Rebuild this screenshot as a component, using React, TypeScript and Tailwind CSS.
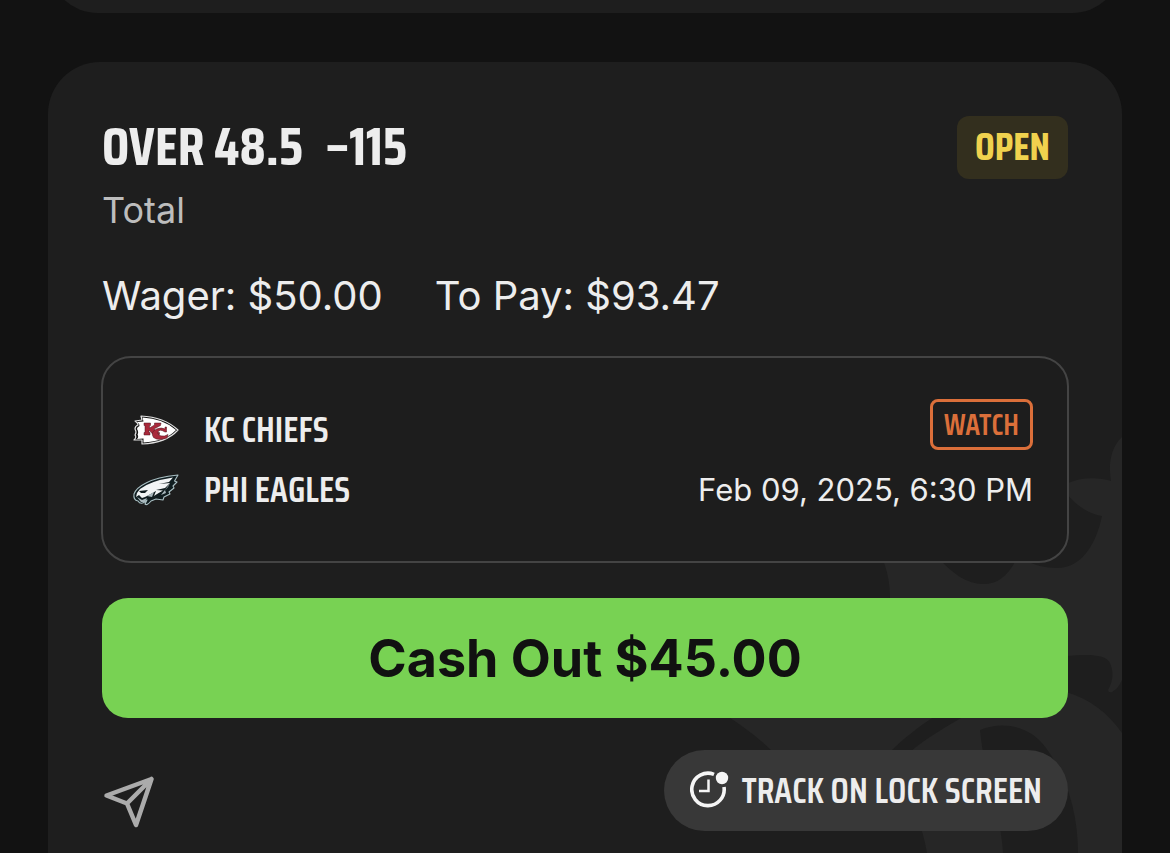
import type { ReactNode } from "react";

const display = "font-['Saira_Condensed','Liberation_Sans_Narrow',sans-serif]";

function Watermark() {
  return (
    <svg aria-hidden="true" className="absolute right-0 bottom-0" width="400" height="440" viewBox="722 413 400 440">
      <path
        fill="#262626"
        d="M1122 437C1111 447 1108 464 1111 481C1098 477 1080 477 1066 484V493C1077 507 1090 514 1102 516C1097 540 1084 568 1057 568C1045 568 1034 565 1024 560H1016C1007 577 997 584 983 584C966 584 953 573 940 560H883C888 573 890 585 890 598V640L722 713C740 724 757 736 773 752H890C903 739 917 728 935 716H964C945 728 927 737 910 752V800C917 815 924 834 927 853H1003C1002 820 985 780 980 730C1002 721 1030 725 1046 748C1068 778 1078 815 1078 853H1122V733C1108 713 1090 699 1066 692V656C1088 654 1106 654 1110 663C1114 673 1113 681 1108 690Q1108 693 1112 692Q1118 689 1122 680Z"
      />
    </svg>
  );
}

function ChiefsLogo() {
  return (
    <svg aria-hidden="true" width="48" height="32" viewBox="0 0 48 32">
      <path d="M9 2L10 6L3 7Q6 9 6 11Q3 12 3 15Q5 18 3 21Q5 23 2 26L10 26L10 30Q34 29 46 16Q32 3 9 2Z" fill="#111" stroke="#e2e2e2" strokeWidth="1.2" strokeLinejoin="round" />
      <path d="M10.500 3.500L11.500 7.500L5 8Q8 10 7.500 12Q5 13 5 15Q7 18 5.500 20.500Q7 23 5 25L11.500 24.500L11.500 28.500Q33 27.500 44 16Q31 4.500 10.500 3.500Z" fill="#fff" />
      <path d="M12 9h6.500v2.500h-1v2.500l5-3v-2h6.500l-.5 2.500-6.500 3.500 3.500 3.500h2v2h-6.500l-4-4.500v2.500h1v2.500h-6v-2.500h1v-7h-1z" fill="#a9293b" stroke="#4d1620" strokeWidth=".5" />
      <path d="M34.500 13v5h-1.500q-5.500-3.500-7 0-1 4.500 6.500 4l3.500-1.500-1 3.500q-9 3-13.500-.5-3.500-5.500 3-8.500 5-2 8.500 0v-2z" fill="#a9293b" stroke="#4d1620" strokeWidth=".5" />
    </svg>
  );
}

function EaglesLogo() {
  return (
    <svg aria-hidden="true" width="48" height="34" viewBox="0 0 48 34">
      <path d="M2 21Q4 15 14 10Q25 4 46 2L42.500 8L45 9L41 13L42 15L37 19L38 21L32 24L31 27L24 26L19 28Q15 33 13 31L15 27Q9 33 6 28Q1 27 2 21Z" fill="#101d20" stroke="#a9bfc3" strokeWidth="1.1" strokeLinejoin="round" />
      <path d="M8 16Q18 8 41 4.500L37 9L27 11L38 10L33 15L24 17L31 17.500L25 21L22 23L24 18L17 22L13 24L10 25L7 22L4 24L5 20Z" fill="#f1f4f5" />
      <path d="M38 10L33 17L36 14ZM33 17L29 22L34 20ZM15 23L22 19L20 24ZM5 24L10 27L15 25L13 29L9 29Z" fill="#a9b8bd" />
      <path d="M7 18L16 17L13 20L9 20Z" fill="#101d20" />
    </svg>
  );
}

function Team({ logo, name }: { logo: ReactNode; name: string }) {
  return (
    <div className="flex h-[60px] items-center gap-6">
      {logo}
      <span className="text-[36px] font-semibold leading-10">{name}</span>
    </div>
  );
}

export default function App() {
  return (
    <main className="flex min-h-screen flex-col overflow-hidden bg-[#121212] px-12 font-['Inter',sans-serif] text-[#ededed]">
      <div className="h-[13px] overflow-hidden">
        <div className="-mt-[87px] h-[100px] rounded-[52px] bg-[#1e1e1e]" />
      </div>

      <article className="relative mt-[49px] flex-1 overflow-hidden rounded-t-[52px] bg-[#1e1e1e] px-[54px] pt-[54px] pb-[22px]">
        <Watermark />
        <div className="relative flex flex-col">
          <header className="flex items-start justify-between">
            <div>
              <h1 className={`${display} flex gap-[22px] text-[54px] font-bold leading-[62px]`}>
                <span>OVER 48.5</span>
                <span>–115</span>
              </h1>
              <p className="text-[36px] leading-[64px] text-[#bdbdbd]">Total</p>
            </div>
            <span className={`${display} flex h-[63px] items-center rounded-[12px] bg-[#332f1e] px-[18px] text-[39px] font-bold text-[#f0d24e]`}>
              OPEN
            </span>
          </header>

          <div className="mt-7 flex gap-[52px] text-[40px] leading-[52px]">
            <p>Wager: $50.00</p>
            <p>To Pay: $93.47</p>
          </div>

          <section className="-mx-px mt-[34px] flex h-[207px] items-start justify-between rounded-[30px] border-2 border-[#444] bg-[#1d1d1d] pt-[41px] pr-[34px] pl-[29px]">
            <div className={`${display} pt-px`}>
              <Team logo={<ChiefsLogo />} name="KC CHIEFS" />
              <Team logo={<EaglesLogo />} name="PHI EAGLES" />
            </div>
            <div className="flex flex-col items-end">
              <button type="button" className={`${display} flex h-[51px] items-center rounded-[8px] border-3 border-[#db6f3a] px-[11px] text-[30px] font-semibold text-[#db6f3a]`}>
                WATCH
              </button>
              <time className="mt-5 text-[31px] leading-10">Feb 09, 2025, 6:30 PM</time>
            </div>
          </section>

          <button type="button" className="mt-[35px] h-[120px] rounded-[26px] bg-[#78d253] pt-0.5 text-[52px] font-bold text-[#111]">
            Cash Out $45.00
          </button>

          <footer className="mt-8 flex items-center justify-between">
            <button type="button" aria-label="Share bet" className="mt-[22px]">
              <svg width="54" height="54" viewBox="102 775 54 54" fill="none" stroke="#ababab" strokeWidth="4.500" strokeLinejoin="round" strokeLinecap="round">
                <path d="M106.500 795.500L151.500 779L136 825L127 803.500ZM127 803.500L151.500 779" />
              </svg>
            </button>
            <button type="button" className={`${display} flex h-[81px] items-center gap-[13px] rounded-full bg-[#383838] px-[26px] text-[36px] font-semibold`}>
              <svg aria-hidden="true" width="39" height="39" viewBox="0 0 39 39" fill="none" stroke="#f5f5f5" strokeWidth="3.600">
                <path d="M24 3.400A16.200 16.200 0 1 0 34 16" />
                <path d="M18.500 8.500V20H9" strokeWidth="2.500" />
                <circle cx="32" cy="7" r="6.200" fill="#f5f5f5" stroke="none" />
              </svg>
              TRACK ON LOCK SCREEN
            </button>
          </footer>
        </div>
      </article>
    </main>
  );
}
